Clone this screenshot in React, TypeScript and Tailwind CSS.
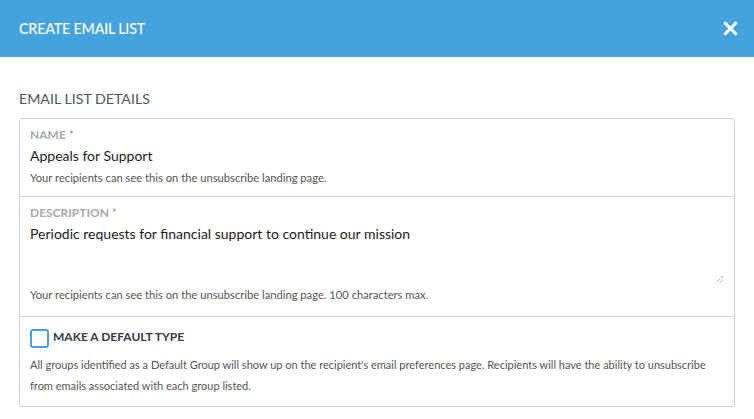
import { X } from 'lucide-react'

export default function App() {
  return (
    <div className="w-[754px] h-[419px] bg-white font-[Lato,sans-serif] overflow-hidden">
      <div className="h-[57px] bg-[#44a3dd] flex items-center justify-between pl-[19px] pr-[13px]">
        <h1 className="text-white text-[14.3px] font-medium tracking-[-0.2px]">CREATE EMAIL LIST</h1>
        <X className="w-[21px] h-[21px] text-white" strokeWidth={3.6} />
      </div>
      <div className="px-[19px] pt-[33px]">
        <h2 className="text-[#4a5561] text-[14.2px] leading-[18px] mb-[10px]">EMAIL LIST DETAILS</h2>
        <div className="border border-[#cfcfcf] rounded-[3px]">
          <div className="px-[10px] pt-[8px] pb-[10px] border-b border-[#d6d6d6]">
            <div className="text-[#a8a8a8] text-[12px] font-bold leading-[16px]">NAME *</div>
            <div className="text-[#1c1c1c] text-[14px] leading-[20px] mt-[3px]">Appeals for Support</div>
            <div className="text-[#555] text-[11.2px] leading-[16px] mt-[4px]">Your recipients can see this on the unsubscribe landing page.</div>
          </div>
          <div className="px-[10px] pt-[8px] pb-[13px] border-b border-[#d6d6d6]">
            <div className="text-[#a8a8a8] text-[12px] font-bold leading-[16px]">DESCRIPTION *</div>
            <div className="relative h-[62px] mt-[3px]">
              <div className="text-[#1c1c1c] text-[14px] leading-[20px]">Periodic requests for financial support to continue our mission</div>
              <svg className="absolute right-0 bottom-[2px]" width="9" height="9" viewBox="0 0 9 9">
                <path d="M8 1 L1 8 M8 4.5 L4.5 8" stroke="#777" strokeWidth="1" strokeDasharray="1 1" />
              </svg>
            </div>
            <div className="text-[#555] text-[11.2px] leading-[16px] mt-[1px]">Your recipients can see this on the unsubscribe landing page. 100 characters max.</div>
          </div>
          <div className="px-[10px] pt-[12px] pb-[10px]">
            <div className="flex items-start gap-[4px]">
              <div className="w-[19px] h-[19px] border-2 border-[#4a9fde] rounded-[3px] bg-white" />
              <div className="text-[#333c47] text-[12px] font-bold leading-[16px]">MAKE A DEFAULT TYPE</div>
            </div>
            <p className="text-[#555] text-[11px] leading-[21px] mt-[6px]">
              All groups identified as a Default Group will show up on the recipient's email preferences page. Recipients will have the ability to unsubscribe from emails associated with each group listed.
            </p>
          </div>
        </div>
      </div>
    </div>
  )
}
